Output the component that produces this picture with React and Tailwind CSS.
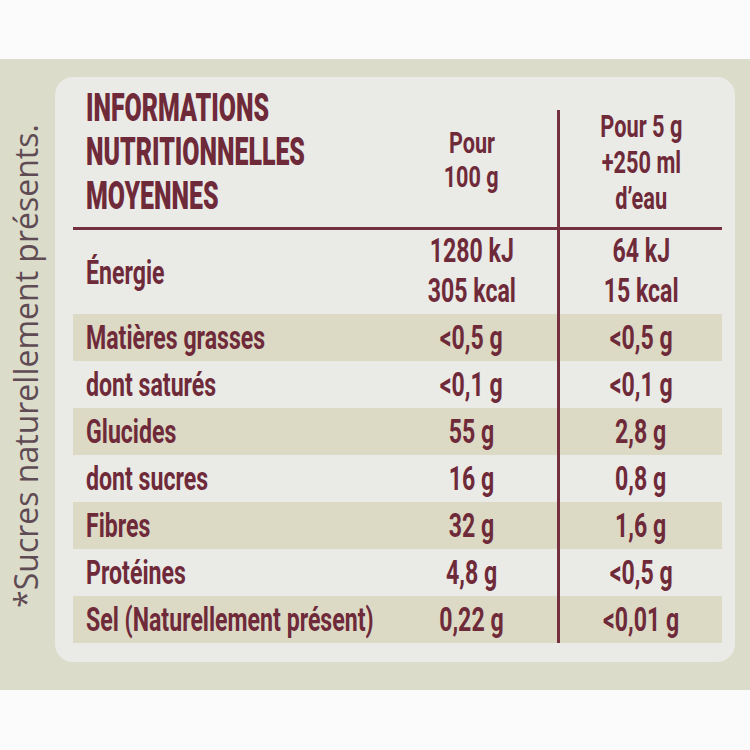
import React from "react";

const INK = "text-[#6f2a3a]";
const S = "inline-block whitespace-nowrap scale-x-[0.68]";
const S2 = "inline-block whitespace-nowrap scale-x-[0.72]";
const SL = "inline-block whitespace-nowrap scale-x-[0.68] origin-left";
const SH = "inline-block whitespace-nowrap scale-x-[0.655] origin-left";

const rows = [
  ["Matières grasses", "<0,5 g", "<0,5 g", true],
  ["dont saturés", "<0,1 g", "<0,1 g", false],
  ["Glucides", "55 g", "2,8 g", true],
  ["dont sucres", "16 g", "0,8 g", false],
  ["Fibres", "32 g", "1,6 g", true],
  ["Protéines", "4,8 g", "<0,5 g", false],
  ["Sel (Naturellement présent)", "0,22 g", "<0,01 g", true],
];

function Row({ label, v1, v2, band }) {
  return (
    <div className={`flex h-[47px] ${band ? "bg-[#dcdac5]" : ""}`}>
      <div className="w-[313px] pl-[13px] flex items-center">
        <span className={SL}>{label}</span>
      </div>
      <div className="w-[171px] flex items-center justify-center">
        <span className={S}>{v1}</span>
      </div>
      <div className="w-[165px] border-l-[3px] border-[#74303f] flex items-center justify-center">
        <span className={S}>{v2}</span>
      </div>
    </div>
  );
}

export default function App() {
  return (
    <div className="w-[750px] h-[750px] bg-[#fbfbfb] flex flex-col overflow-hidden">
      <div className="h-[59px] shrink-0" />
      <div className="h-[631px] shrink-0 bg-[#dcdccb] flex">
        <div className="w-[55px] shrink-0 flex items-center justify-center pb-[18px] pr-[4px]">
          <span className="shrink-0 inline-block whitespace-nowrap -rotate-90 text-[32px] leading-none text-[#5f4b53] font-['Open_Sans',sans-serif]">
            *Sucres naturellement présents.
          </span>
        </div>
        <div className="mt-[18px] h-[585px] w-[680px] rounded-[18px] bg-[#eaeae6] px-[18px] font-['Roboto',sans-serif] font-bold text-[34px]">
          <div className={`w-[649px] ${INK}`}>
            <div className="flex h-[150px]">
              <div className="w-[313px] pl-[13px] pt-[9px] text-[38px] leading-[44px] font-black flex flex-col">
                <span className={SH}>INFORMATIONS</span>
                <span className={SH}>NUTRITIONNELLES</span>
                <span className={SH}>MOYENNES</span>
              </div>
              <div className="w-[171px] pt-[33px] pb-[17px] flex flex-col items-center justify-center text-[30px] leading-[34px]">
                <span className={S2}>Pour</span>
                <span className={S2}>100 g</span>
              </div>
              <div className="w-[165px] mt-[33px] pb-[13px] border-l-[3px] border-[#74303f] flex flex-col items-center justify-center text-[32px] leading-[36px]">
                <span className={S}>Pour 5 g</span>
                <span className={S}>+250 ml</span>
                <span className={S}>d’eau</span>
              </div>
            </div>
            <div className="h-[3px] bg-[#74303f]" />
            <div className="flex h-[84px]">
              <div className="w-[313px] pl-[13px] flex items-center">
                <span className={SL}>Énergie</span>
              </div>
              <div className="w-[171px] flex flex-col items-center justify-center leading-[40px] pb-[4px]">
                <span className={S}>1280 kJ</span>
                <span className={S}>305 kcal</span>
              </div>
              <div className="w-[165px] border-l-[3px] border-[#74303f] flex flex-col items-center justify-center leading-[40px] pb-[4px]">
                <span className={S}>64 kJ</span>
                <span className={S}>15 kcal</span>
              </div>
            </div>
            {rows.map(([l, a, b, band]) => (
              <Row key={l} label={l} v1={a} v2={b} band={band} />
            ))}
          </div>
        </div>
      </div>
      <div className="flex-1" />
    </div>
  );
}
